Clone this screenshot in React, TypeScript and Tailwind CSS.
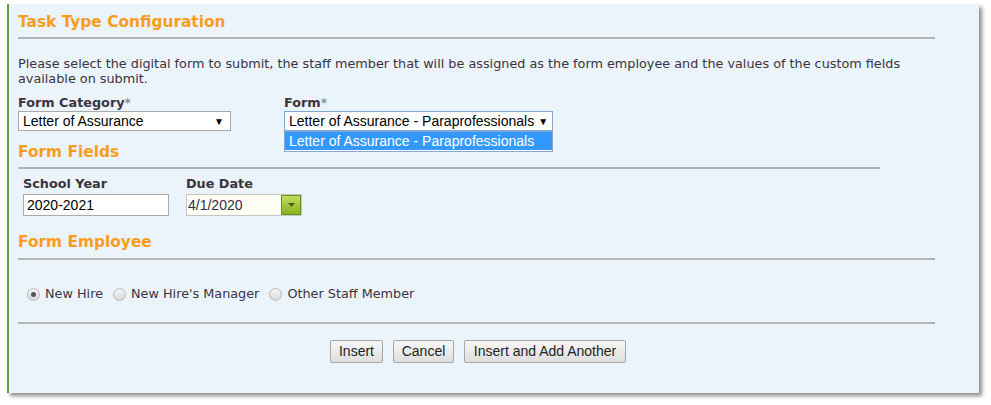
import React from 'react';

const verdana = { fontFamily: '"DejaVu Sans", Verdana, sans-serif' };
const arial = { fontFamily: '"Liberation Sans", Arial, sans-serif' };

function Heading({ children }: { children: React.ReactNode }) {
  return (
    <div className="h-[20px] text-[15.4px] leading-[20px] font-bold text-[#f99d1c]">{children}</div>
  );
}

function Rule({ width }: { width: string }) {
  return <div className={`h-[2px] bg-[#b4b4b4] ${width}`} />;
}

function Radio({ checked, label }: { checked?: boolean; label: string }) {
  return (
    <label className="flex items-center gap-[5px] mr-[10px]">
      <span className="w-[13px] h-[13px] rounded-full border border-[#b9b9b9] bg-gradient-to-b from-[#f4f4f4] to-[#d9d9d9] flex items-center justify-center">
        {checked && <span className="w-[5px] h-[5px] rounded-full bg-[#555]" />}
      </span>
      <span>{label}</span>
    </label>
  );
}

function Select({ value, width, focused }: { value: string; width: string; focused?: boolean }) {
  return (
    <div
      className={`h-[20px] ${width} bg-white flex items-center justify-between pl-[4px] pr-[6px] text-[14px] text-black whitespace-nowrap border ${
        focused ? 'border-[#7fa7d6]' : 'border-[#a9a9a9]'
      }`}
      style={arial}
    >
      <span>{value}</span>
      <span className="text-[10px] ml-[4px]">▼</span>
    </div>
  );
}

function Button({ children, width }: { children: React.ReactNode; width: string }) {
  return (
    <button
      className={`h-[23px] ${width} border border-[#a6a6a6] rounded-[2px] bg-gradient-to-b from-[#f7f7f7] to-[#dedede] text-[14px] text-[#222]`}
      style={arial}
    >
      {children}
    </button>
  );
}

export default function App() {
  return (
    <div className="w-[991px] h-[405px] bg-white pt-[4px] pl-[7px]" style={verdana}>
      <div className="w-[972px] h-[389px] bg-[#ebf3fb] border-l-2 border-[#6e9b3f] shadow-[3px_3px_4px_rgba(0,0,0,0.45)] pl-[9px] pt-[8px] text-[#3b3340]">
        <Heading>Task Type Configuration</Heading>
        <div className="mt-[5px]">
          <Rule width="w-[917px]" />
        </div>
        <p className="mt-[17px] text-[12.8px] leading-[15px] w-[917px]">
          Please select the digital form to submit, the staff member that will be assigned as the form employee and the values of the custom fields available on submit.
        </p>

        <div className="flex mt-[10px] text-[12.8px]">
          <div className="w-[266px]">
            <div className="h-[14px] leading-[14px] font-bold">
              Form Category<span className="font-normal text-[#777]">*</span>
            </div>
            <div className="mt-[1px]">
              <Select value="Letter of Assurance" width="w-[213px]" />
            </div>
          </div>
          <div className="relative">
            <div className="h-[14px] leading-[14px] font-bold">
              Form<span className="font-normal text-[#777]">*</span>
            </div>
            <div className="mt-[1px]">
              <Select value="Letter of Assurance - Paraprofessionals" width="w-[269px]" focused />
            </div>
            <div className="absolute left-0 top-[35px] w-[269px] h-[21px] bg-white border border-[#8aa8cc] z-10" style={arial}>
              <div className="h-[18px] bg-[#3399ff] text-white text-[14px] leading-[18px] pl-[4px] whitespace-nowrap">
                Letter of Assurance - Paraprofessionals
              </div>
            </div>
          </div>
        </div>

        <div className="mt-[11px]">
          <Heading>Form Fields</Heading>
        </div>
        <div className="mt-[5px]">
          <Rule width="w-[862px]" />
        </div>

        <div className="flex mt-[8px] pl-[5px] text-[12.8px]">
          <div className="w-[163px]">
            <div className="h-[14px] leading-[14px] font-bold">School Year</div>
            <div className="mt-[3px] w-[146px] h-[22px] bg-white border border-[#a9a9a9] flex items-center pl-[3px] text-[14px] text-black" style={arial}>
              2020-2021
            </div>
          </div>
          <div>
            <div className="h-[14px] leading-[14px] font-bold">Due Date</div>
            <div className="mt-[3px] flex w-[116px] h-[22px] border border-[#c5c5c5] bg-[#fffff4]">
              <div className="flex-1 flex items-center pl-[1px] text-[14px] text-[#3a2a4a]" style={arial}>
                4/1/2020
              </div>
              <div className="w-[20px] h-full border border-[#6d8f1c] bg-gradient-to-b from-[#c3dd5d] to-[#86b11f] flex items-center justify-center">
                <svg width="7" height="4" viewBox="0 0 7 4">
                  <path d="M0 0h7L3.5 4z" fill="#4a5a20" />
                </svg>
              </div>
            </div>
          </div>
        </div>

        <div className="mt-[16px]">
          <Heading>Form Employee</Heading>
        </div>
        <div className="mt-[6px]">
          <Rule width="w-[917px]" />
        </div>

        <div className="flex items-center mt-[27px] ml-[9px] text-[12.8px] h-[14px]">
          <Radio checked label="New Hire" />
          <Radio label="New Hire's Manager" />
          <Radio label="Other Staff Member" />
        </div>

        <div className="mt-[21px]">
          <Rule width="w-[917px]" />
        </div>

        <div className="flex justify-center gap-[10px] mt-[16px] w-[917px] pl-[3px]">
          <Button width="w-[53px]">Insert</Button>
          <Button width="w-[61px]">Cancel</Button>
          <Button width="w-[162px]">Insert and Add Another</Button>
        </div>
      </div>
    </div>
  );
}
